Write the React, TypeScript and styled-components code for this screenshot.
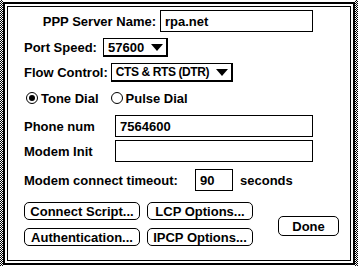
import React from "react";
import styled, { createGlobalStyle } from "styled-components";

const Global = createGlobalStyle`
  html, body { margin: 0; padding: 0; background: #fff; }
  body { font-family: "Liberation Sans", Arial, sans-serif; font-weight: bold; font-size: 13px; color: #000; }
`;

const Screen = styled.div`
  width: 358px;
  height: 266px;
  display: flex;
  overflow: hidden;
  background: #fff;
`;

const Dither = styled.div`
  width: 3px;
  flex: none;
  background: repeating-conic-gradient(#000 0 25%, #fff 0 50%) 0 0 / 2px 2px;
`;

const Window = styled.div`
  flex: 1;
  margin-top: 2px;
  margin-bottom: 1px;
  border: 2px solid #000;
  padding: 2px;
  display: flex;
`;

const Inner = styled.div`
  flex: 1;
  border: 1px solid #000;
  padding: 1px 0 0 16px;
  display: flex;
  flex-direction: column;
`;

const Row = styled.div<{ $h: number; $mt?: number }>`
  display: flex;
  align-items: center;
  height: ${(p) => p.$h}px;
  margin-top: ${(p) => p.$mt ?? 0}px;
`;

const Label = styled.span<{ $w?: number; $right?: boolean; $ml?: number }>`
  display: inline-block;
  width: ${(p) => (p.$w ? `${p.$w}px` : "auto")};
  margin-left: ${(p) => p.$ml ?? 0}px;
  text-align: ${(p) => (p.$right ? "right" : "left")};
  white-space: nowrap;
`;

const Field = styled.div<{ $w: number; $ml: number }>`
  width: ${(p) => p.$w}px;
  height: 22px;
  box-sizing: border-box;
  border: 1px solid #000;
  margin-left: ${(p) => p.$ml}px;
  padding-left: 4px;
  display: flex;
  align-items: center;
  white-space: nowrap;
`;

const Popup = styled.div<{ $w: number; $ml: number; $tight?: boolean }>`
  width: ${(p) => p.$w}px;
  height: 19px;
  box-sizing: border-box;
  border: 1px solid #000;
  border-right-width: 2px;
  border-bottom-width: 2px;
  margin-left: ${(p) => p.$ml}px;
  padding: 0 3px 0 4px;
  display: flex;
  align-items: center;
  justify-content: space-between;
  white-space: nowrap;
  font-size: ${(p) => (p.$tight ? 12 : 13)}px;
  letter-spacing: ${(p) => (p.$tight ? "-0.4px" : "0")};
`;

const Tri = styled.span`
  width: 0;
  height: 0;
  border-left: 6px solid transparent;
  border-right: 6px solid transparent;
  border-top: 7px solid #000;
`;

const Radio = styled.span<{ $on?: boolean }>`
  width: 12px;
  height: 12px;
  box-sizing: border-box;
  border: 1px solid #000;
  border-radius: 50%;
  margin-right: 3px;
  display: flex;
  align-items: center;
  justify-content: center;
  &::after {
    content: "";
    width: 6px;
    height: 6px;
    border-radius: 50%;
    background: ${(p) => (p.$on ? "#000" : "transparent")};
  }
`;

const RadioItem = styled.div<{ $ml: number }>`
  display: flex;
  align-items: center;
  margin-left: ${(p) => p.$ml}px;
`;

const ButtonArea = styled.div`
  display: flex;
  align-items: flex-start;
  margin-top: 11px;
`;

const ButtonCol = styled.div<{ $ml: number }>`
  display: flex;
  flex-direction: column;
  gap: 8px;
  margin-left: ${(p) => p.$ml}px;
`;

const Button = styled.div<{ $w: number; $h?: number; $mt?: number; $ml?: number }>`
  width: ${(p) => p.$w}px;
  height: ${(p) => p.$h ?? 18}px;
  margin-top: ${(p) => p.$mt ?? 0}px;
  margin-left: ${(p) => p.$ml ?? 0}px;
  box-sizing: border-box;
  border: 1px solid #000;
  border-radius: 5px;
  display: flex;
  align-items: center;
  justify-content: center;
  white-space: nowrap;
`;

export default function App() {
  return (
    <>
      <Global />
      <Screen>
        <Dither />
        <Window>
          <Inner>
            <Row $h={22} $mt={2}>
              <Label $w={132} $right>PPP Server Name:</Label>
              <Field $w={153} $ml={4}>rpa.net</Field>
            </Row>
            <Row $h={19} $mt={6}>
              <Label>Port Speed:</Label>
              <Popup $w={65} $ml={6}>57600<Tri /></Popup>
            </Row>
            <Row $h={19} $mt={6}>
              <Label>Flow Control:</Label>
              <Popup $w={122} $ml={3} $tight>CTS &amp; RTS (DTR)<Tri /></Popup>
            </Row>
            <Row $h={18} $mt={7}>
              <RadioItem $ml={2}><Radio $on />Tone Dial</RadioItem>
              <RadioItem $ml={12}><Radio />Pulse Dial</RadioItem>
            </Row>
            <Row $h={22} $mt={8}>
              <Label $w={91}>Phone num</Label>
              <Field $w={198} $ml={0}>7564600</Field>
            </Row>
            <Row $h={22} $mt={3}>
              <Label $w={91}>Modem Init</Label>
              <Field $w={198} $ml={0} />
            </Row>
            <Row $h={22} $mt={7}>
              <Label $w={171}>Modem connect timeout:</Label>
              <Field $w={38} $ml={0}>90</Field>
              <Label $ml={7}>seconds</Label>
            </Row>
            <ButtonArea>
              <ButtonCol $ml={0}>
                <Button $w={116}>Connect Script...</Button>
                <Button $w={116}>Authentication...</Button>
              </ButtonCol>
              <ButtonCol $ml={7}>
                <Button $w={106}>LCP Options...</Button>
                <Button $w={106}>IPCP Options...</Button>
              </ButtonCol>
              <Button $w={61} $h={20} $mt={14} $ml={25}>Done</Button>
            </ButtonArea>
          </Inner>
        </Window>
        <Dither />
      </Screen>
    </>
  );
}
